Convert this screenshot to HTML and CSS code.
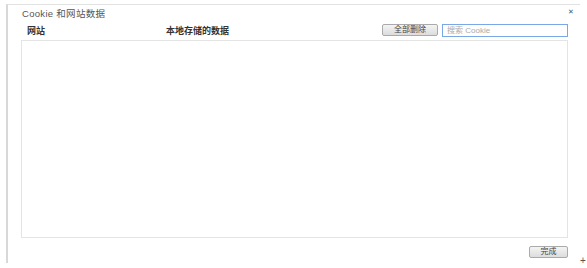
FILE: index.html
```html
<!DOCTYPE html>
<html lang="zh-CN">
<head>
    <meta charset="UTF-8">
    <title>Cookie 和网站数据</title>
    <link rel="stylesheet" href="styles.css">
</head>
<body>
    <div class="dialog">
        <div class="title-bar">
            <span class="title">Cookie 和网站数据</span>
            <span class="close">&#x2715;</span>
        </div>
        <div class="content">
            <div class="header-row">
                <span class="col-site">网站</span>
                <span class="col-data">本地存储的数据</span>
                <button type="button" class="btn remove-all">全部删除</button>
                <input type="search" class="search" placeholder="搜索 Cookie">
            </div>
            <div class="list"></div>
            <div class="footer">
                <button type="button" class="btn done">完成</button>
            </div>
        </div>
    </div>
    <span class="resize">+</span>
</body>
</html>
```

FILE: styles.css
```css
body {
    margin: 0;
    font-family: "Liberation Sans", "Noto Sans CJK SC", sans-serif;
    font-size: 10px;
    color: #333;
    background: #fff;
    width: 587px;
    height: 268px;
    overflow: hidden;
}
.dialog {
    margin: 4px 0 0 6px;
    width: 574px;
    height: 259px;
    border-top: 1px solid #e2e2e2;
    border-left: 2px solid #d8d8d8;
    box-sizing: border-box;
}
.title-bar {
    display: flex;
    justify-content: space-between;
    align-items: center;
    padding: 2px 6px 0 14px;
    height: 12px;
}
.title {
    font-size: 9.5px;
    color: #555;
    letter-spacing: 0.3px;
}
.close {
    font-size: 7px;
    color: #555;
    margin-bottom: 2px;
}
.content {
    padding: 0 9px 0 13px;
}
.header-row {
    display: flex;
    align-items: center;
    height: 21px;
    padding-top: 1px;
    box-sizing: border-box;
}
.col-site {
    font-weight: bold;
    width: 139px;
    padding-left: 6px;
    font-size: 9px;
}
.col-data {
    font-weight: bold;
    flex: 1;
    font-size: 9px;
}
.btn {
    font-family: inherit;
    font-size: 8px;
    color: #444;
    background: linear-gradient(#f4f4f4, #dcdcdc);
    border: 1px solid #aaa;
    border-radius: 2px;
    padding: 0;
    height: 12px;
    line-height: 10px;
}
.remove-all {
    width: 56px;
    margin-right: 4px;
}
.search {
    width: 126px;
    height: 13px;
    box-sizing: border-box;
    border: 1px solid #7aa7e8;
    font-family: inherit;
    font-size: 8px;
    padding: 0 4px;
    margin-right: 3px;
}
.search::placeholder {
    color: #aaa;
}
.list {
    height: 196px;
    border: 1px solid #e4e4e4;
    margin-right: 3px;
}
.footer {
    display: flex;
    justify-content: flex-end;
    padding: 8px 3px 0 0;
}
.done {
    width: 39px;
    height: 12px;
}
.resize {
    position: absolute;
    left: 580px;
    top: 255px;
    font-size: 10px;
    color: #555;
}
```
